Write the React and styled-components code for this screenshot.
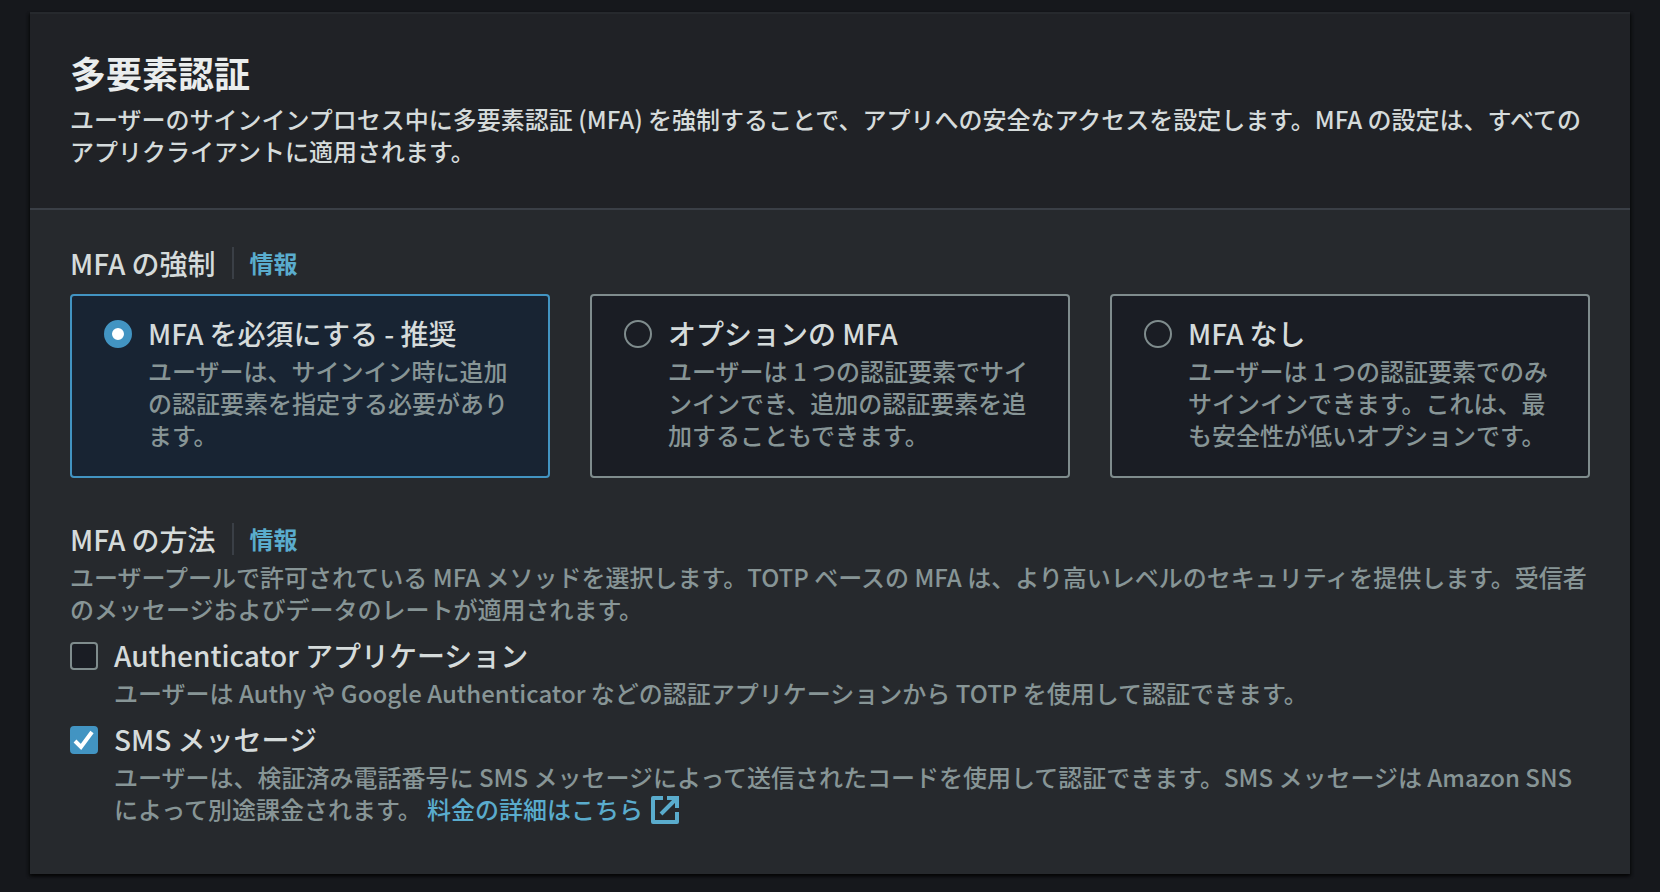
import React, { useState } from 'react';
import styled, { createGlobalStyle } from 'styled-components';

const GlobalStyle = createGlobalStyle`
  * {
    box-sizing: border-box;
  }
  body {
    margin: 0;
    background-color: #16181c;
    color: #d5dbdb;
    font-family: 'Noto Sans CJK JP', sans-serif;
    font-size: 24px;
    font-weight: 500;
    line-height: 32px;
    text-spacing-trim: space-all;
  }
`;

const Page = styled.main`
  padding: 12px 30px 18px;
`;

const Panel = styled.section`
  background-color: #26292d;
  border-top: 2px solid #26292d;
  box-shadow: 0 2px 3px 0 rgba(0, 0, 0, 0.6), 2px 2px 3px 0 rgba(0, 0, 0, 0.3), -2px 2px 3px 0 rgba(0, 0, 0, 0.3);
`;

const PanelHeader = styled.header`
  background-color: #202226;
  border-bottom: 2px solid #3a3f46;
  padding: 36px 40px 41px;
  h1 {
    margin: 0 0 9px;
    font-size: 36px;
    font-weight: 700;
    line-height: 44px;
    color: #eaeded;
  }
  p {
    margin: 0;
  }
`;

const PanelBody = styled.div`
  display: flex;
  flex-direction: column;
  gap: 44px;
  padding: 36px 40px 49px;
`;

const Field = styled.fieldset`
  border: 0;
  margin: 0;
  padding: 0;
  min-width: 0;
`;

const FieldHeader = styled.div`
  display: flex;
  align-items: center;
  height: 34px;
  margin-bottom: ${props => props.$space}px;
  font-size: 28px;
`;

const InfoLink = styled.a`
  margin-left: 16px;
  padding-left: 16px;
  border-left: 2px solid #3a3f46;
  font-size: 24px;
  font-weight: 700;
  color: #5aaccd;
  text-decoration: none;
`;

const Tiles = styled.div`
  display: grid;
  grid-template-columns: repeat(3, 1fr);
  gap: 40px;
`;

const Tile = styled.label`
  display: flex;
  gap: 16px;
  padding: 19px 32px 25px;
  border: 2px solid ${props => (props.$selected ? '#4294c2' : '#7f8c8d')};
  border-radius: 4px;
  background-color: ${props => (props.$selected ? '#182433' : '#1a1d24')};
  cursor: pointer;
`;

const Radio = styled.input`
  appearance: none;
  flex: none;
  width: 28px;
  height: 28px;
  margin: 5px 0 3px;
  border: 2px solid #7f8c8d;
  border-radius: 50%;
  background-color: #1a1d24;
  &:checked {
    border: 8px solid #4294c2;
    background-color: #ffffff;
  }
`;

const Checkbox = styled.input`
  appearance: none;
  grid-area: 1 / 1;
  width: 28px;
  height: 28px;
  margin: 0;
  border: 2px solid #7f8c8d;
  border-radius: 4px;
  background-color: #1a1d24;
  &:checked {
    border-color: #4294c2;
    background-color: #4294c2;
  }
`;

const CheckboxControl = styled.span`
  display: grid;
  flex: none;
  height: 28px;
  margin: 5px 0 3px;
  svg {
    grid-area: 1 / 1;
    pointer-events: none;
  }
`;

const Choice = styled.div`
  display: flex;
  gap: 16px;
`;

const ChoiceList = styled.div`
  display: flex;
  flex-direction: column;
  gap: 12px;
  margin-top: 12px;
`;

const ChoiceText = styled.span`
  flex: 1;
  min-width: 0;
`;

const ChoiceTitle = styled.span`
  display: block;
  margin-bottom: 4px;
  font-size: 28px;
  line-height: 36px;
`;

const Description = styled.span`
  display: block;
  color: #879596;
`;

const ExternalLink = styled.a`
  color: #5aaccd;
  text-decoration: none;
  svg {
    margin-left: 8px;
    vertical-align: -5px;
  }
`;

const CheckIcon = () => (
  <svg width="28" height="28" viewBox="0 0 28 28" fill="none" stroke="#ffffff" strokeWidth="4" aria-hidden="true">
    <path d="M5 15l6 6L22 6" />
  </svg>
);

const ExternalIcon = () => (
  <svg width="28" height="28" viewBox="0 0 28 28" fill="none" stroke="currentColor" strokeWidth="4" aria-hidden="true">
    <path strokeLinejoin="round" d="M12 2H2v24h24V16" />
    <path d="M16 2h10v10M10 18L26 2" />
  </svg>
);

const enforcementOptions = [
  {
    value: 'required',
    title: 'MFA を必須にする - 推奨',
    description: 'ユーザーは、サインイン時に追加の認証要素を指定する必要があります。',
  },
  {
    value: 'optional',
    title: 'オプションの MFA',
    description: 'ユーザーは 1 つの認証要素でサインインでき、追加の認証要素を追加することもできます。',
  },
  {
    value: 'none',
    title: 'MFA なし',
    description: 'ユーザーは 1 つの認証要素でのみサインインできます。これは、最も安全性が低いオプションです。',
  },
];

const MethodOption = ({ id, title, defaultChecked, children }) => {
  const [checked, setChecked] = useState(defaultChecked);
  return (
    <Choice>
      <CheckboxControl>
        <Checkbox id={id} type="checkbox" checked={checked} onChange={e => setChecked(e.target.checked)} />
        {checked && <CheckIcon />}
      </CheckboxControl>
      <ChoiceText>
        <ChoiceTitle as="label" htmlFor={id}>
          {title}
        </ChoiceTitle>
        <Description>{children}</Description>
      </ChoiceText>
    </Choice>
  );
};

const App = () => {
  const [enforcement, setEnforcement] = useState('required');

  return (
    <>
      <GlobalStyle />
      <Page lang="ja">
        <Panel>
          <PanelHeader>
            <h1>多要素認証</h1>
            <p>
              ユーザーのサインインプロセス中に多要素認証 (MFA) を強制することで、アプリへの安全なアクセスを設定します。MFA
              の設定は、すべてのアプリクライアントに適用されます。
            </p>
          </PanelHeader>
          <PanelBody>
            <Field aria-labelledby="enforcement-label">
              <FieldHeader $space={14}>
                <span id="enforcement-label">MFA の強制</span>
                <InfoLink href="#enforcement">情報</InfoLink>
              </FieldHeader>
              <Tiles>
                {enforcementOptions.map(({ value, title, description }) => (
                  <Tile key={value} $selected={value === enforcement}>
                    <Radio
                      type="radio"
                      name="enforcement"
                      value={value}
                      checked={value === enforcement}
                      onChange={() => setEnforcement(value)}
                    />
                    <ChoiceText>
                      <ChoiceTitle>{title}</ChoiceTitle>
                      <Description>{description}</Description>
                    </ChoiceText>
                  </Tile>
                ))}
              </Tiles>
            </Field>
            <Field aria-labelledby="methods-label">
              <FieldHeader $space={5}>
                <span id="methods-label">MFA の方法</span>
                <InfoLink href="#methods">情報</InfoLink>
              </FieldHeader>
              <Description>
                ユーザープールで許可されている MFA メソッドを選択します。TOTP ベースの MFA
                は、より高いレベルのセキュリティを提供します。受信者のメッセージおよびデータのレートが適用されます。
              </Description>
              <ChoiceList>
                <MethodOption id="totp" title="Authenticator アプリケーション" defaultChecked={false}>
                  ユーザーは Authy や Google Authenticator などの認証アプリケーションから TOTP を使用して認証できます。
                </MethodOption>
                <MethodOption id="sms" title="SMS メッセージ" defaultChecked>
                  ユーザーは、検証済み電話番号に SMS メッセージによって送信されたコードを使用して認証できます。SMS
                  メッセージは Amazon SNS によって別途課金されます。{' '}
                  <ExternalLink href="#pricing">
                    料金の詳細はこちら
                    <ExternalIcon />
                  </ExternalLink>
                </MethodOption>
              </ChoiceList>
            </Field>
          </PanelBody>
        </Panel>
      </Page>
    </>
  );
};

export default App;
